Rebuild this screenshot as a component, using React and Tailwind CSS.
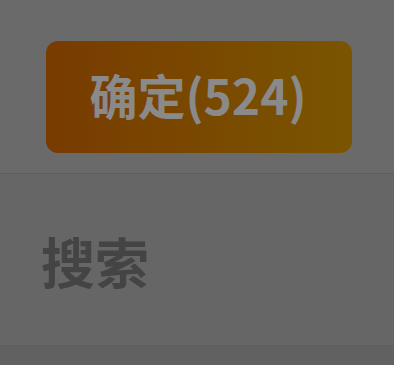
export default function App() {
  return (
    <div className="w-[394px] h-[365px] flex flex-col bg-[#6a6a6a] overflow-hidden" style={{ fontFamily: '"Noto Sans CJK SC", "Noto Sans", sans-serif' }}>
      <div className="h-[173px] shrink-0 flex items-start pt-[41px] pl-[46px]">
        <div className="w-[306px] h-[112px] rounded-[12px] bg-gradient-to-r from-[#783b00] to-[#7a5500] flex items-center justify-center">
          <span className="text-[48px] font-bold text-[#8a8a8a] leading-none pb-[6px] pr-[2px]">确定(524)</span>
        </div>
      </div>
      <div className="h-px shrink-0 bg-[#5e5e5e]"></div>
      <div className="h-[172px] shrink-0 bg-[#666666] flex items-center pl-[41px] border-b border-[#5e5e5e]">
        <span className="text-[54px] font-semibold text-[#444444] leading-none pt-[2px]">搜索</span>
      </div>
      <div className="flex-1 bg-[#616161]"></div>
    </div>
  );
}
